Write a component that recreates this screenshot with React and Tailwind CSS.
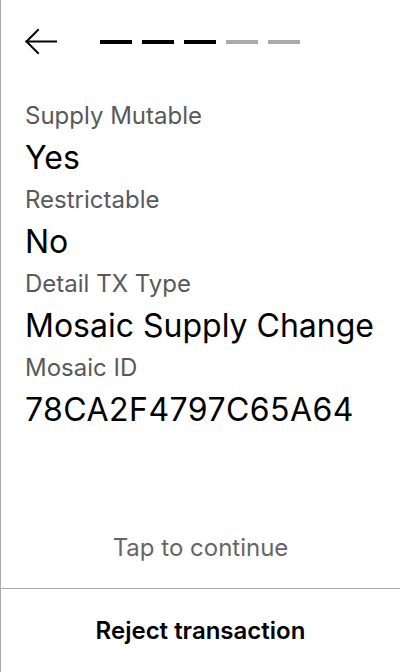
const rows = [
  { label: 'Supply Mutable', value: 'Yes', cls: '' },
  { label: 'Restrictable', value: 'No', cls: '' },
  { label: 'Detail TX Type', value: 'Mosaic Supply Change', cls: '' },
  { label: 'Mosaic ID', value: '78CA2F4797C65A64', cls: 'tracking-[0.45px]' },
];

const steps = [true, true, true, false, false];

export default function App() {
  return (
    <div className="flex h-[672px] w-[400px] flex-col border-l border-[#aaaaaa] bg-white font-['Inter',sans-serif] text-black">
      {/* header */}
      <div className="flex h-[86px] items-center pb-[2px] pl-[24px]">
        <svg width="34" height="28" viewBox="0 0 34 28" fill="none" stroke="black" strokeWidth="2" strokeLinecap="square">
          <path d="M1.5 13.5H31" />
          <path d="M13 2L1.5 13.5L13 25" />
        </svg>
        <div className="ml-[41px] flex gap-[10px]">
          {steps.map((done, i) => (
            <span key={i} className={`h-[4px] w-[32px] ${done ? 'bg-black' : 'bg-[#aaaaaa]'}`} />
          ))}
        </div>
      </div>

      {/* details */}
      <div className="flex flex-col px-[24px] pt-[12px]">
        {rows.map((r) => (
          <div key={r.label} className="flex flex-col">
            <div className="flex h-[36px] items-center text-[24px] leading-none text-[#595959]">{r.label}</div>
            <div className={`flex h-[48px] items-center text-[32px] leading-none ${r.cls}`}>{r.value}</div>
          </div>
        ))}
      </div>

      <div className="flex-1" />

      <div className="flex h-[42px] items-center justify-center text-[24px] leading-none text-[#666666]">Tap to continue</div>
      <div className="mt-[19px] h-px bg-[#aaaaaa]" />
      <button className="flex h-[83px] items-center justify-center text-[24px] font-semibold leading-none">Reject transaction</button>
    </div>
  );
}
